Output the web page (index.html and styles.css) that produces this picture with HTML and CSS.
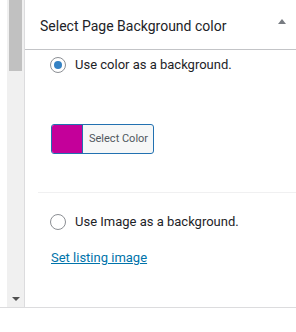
FILE: index.html
```html
<!DOCTYPE html>
<html lang="en">
<head>
    <meta charset="UTF-8">
    <title>Page Background</title>
    <link rel="stylesheet" href="styles.css">
</head>
<body>
    <div class="frame">
        <!-- Scrollbar -->
        <div class="scrollbar">
            <div class="thumb"></div>
            <div class="arrow-down"></div>
        </div>

        <!-- Meta box -->
        <div class="panel">
            <div class="panel-header">
                <span class="panel-title">Select Page Background color</span>
                <span class="toggle"></span>
            </div>
            <div class="panel-body">
                <label class="option">
                    <input type="radio" name="bg" checked>
                    <span class="radio"></span>
                    Use color as a background.
                </label>
                <div class="color-picker">
                    <span class="swatch"></span>
                    <span class="picker-text">Select Color</span>
                </div>
                <hr class="divider">
                <label class="option">
                    <input type="radio" name="bg">
                    <span class="radio"></span>
                    Use Image as a background.
                </label>
                <a href="#" class="set-image">Set listing image</a>
            </div>
        </div>
    </div>
</body>
</html>
```
FILE: styles.css
```css
body {
    margin: 0;
    background: #fff;
    font-family: Roboto, 'Noto Sans', sans-serif;
    color: #1d2327;
}

.frame {
    display: flex;
    height: 307px;
    border-bottom: 1px solid #dcdcde;
}

/* Scrollbar */
.scrollbar {
    width: 17px;
    margin-left: 7px;
    background: #f0f0f0;
    border-right: 1px solid #dcdcde;
    display: flex;
    flex-direction: column;
    align-items: center;
    justify-content: space-between;
}

.thumb {
    width: 13px;
    height: 71px;
    background: #c1c1c1;
}

.arrow-down {
    width: 0;
    height: 0;
    margin-bottom: 6px;
    border-left: 4px solid transparent;
    border-right: 4px solid transparent;
    border-top: 4px solid #505050;
}

/* Panel */
.panel {
    flex: 1;
}

.panel-header {
    height: 47px;
    display: flex;
    align-items: center;
    justify-content: space-between;
    padding: 2px 10px 0 15px;
    border-bottom: 1px solid #c3c4c7;
}

.panel-title {
    font-size: 14px;
    line-height: 20px;
}

.toggle {
    width: 0;
    height: 0;
    margin-top: -8px;
    border-left: 4px solid transparent;
    border-right: 4px solid transparent;
    border-bottom: 5px solid #787c82;
}

.panel-body {
    display: flex;
    flex-direction: column;
    align-items: flex-start;
    padding: 6px 0 0 13px;
}

.option {
    display: flex;
    align-items: center;
    gap: 9px;
    margin-left: 12px;
    font-size: 13px;
    line-height: 18px;
}

.option input {
    display: none;
}

.radio {
    width: 14px;
    height: 14px;
    border: 1px solid #8c8f94;
    border-radius: 50%;
    background: #fff;
    display: flex;
    align-items: center;
    justify-content: center;
}

.option input:checked + .radio::after {
    content: "";
    width: 8px;
    height: 8px;
    border-radius: 50%;
    background: #3582c4;
}

.color-picker {
    display: flex;
    margin: 50px 0 0 13px;
    height: 28px;
    border: 1px solid #2271b1;
    border-radius: 3px;
    overflow: hidden;
    background: #f6f7f7;
}

.swatch {
    width: 30px;
    background: #c4009a;
}

.picker-text {
    padding: 0 5px 0 6px;
    border-left: 1px solid #2271b1;
    font-size: 11px;
    line-height: 28px;
    color: #50575e;
}

.divider {
    align-self: stretch;
    margin: 38px 0 0;
    border: 0;
    border-top: 1px solid #f0f0f1;
}

.divider + .option {
    margin-top: 20px;
}

.set-image {
    margin: 18px 0 0 13px;
    font-size: 13px;
    line-height: 18px;
    color: #0073aa;
}
```
